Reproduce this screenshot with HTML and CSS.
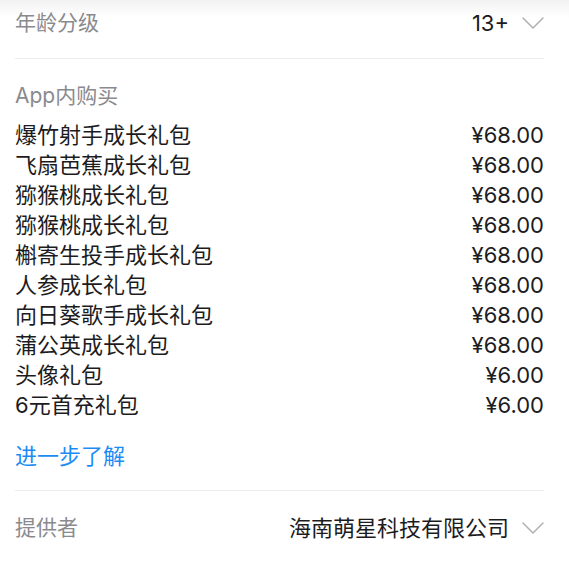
FILE: index.html
```html
<!DOCTYPE html>
<html lang="zh-CN">
<head>
<meta charset="utf-8">
<title>App信息</title>
<link rel="stylesheet" href="styles.css">
</head>
<body>
<div class="page">
  <div class="row rating">
    <span class="label">年龄分级</span>
    <span class="value">13+<svg class="chev" viewBox="0 0 22 12" width="22" height="12"><path d="M1 1 L11 11 L21 1" fill="none" stroke="#b0b0b4" stroke-width="1.5" stroke-linecap="round" stroke-linejoin="round"/></svg></span>
  </div>
  <div class="iap">
    <div class="label title">App内购买</div>
    <ul class="items">
      <li><span>爆竹射手成长礼包</span><span>¥68.00</span></li>
      <li><span>飞扇芭蕉成长礼包</span><span>¥68.00</span></li>
      <li><span>猕猴桃成长礼包</span><span>¥68.00</span></li>
      <li><span>猕猴桃成长礼包</span><span>¥68.00</span></li>
      <li><span>槲寄生投手成长礼包</span><span>¥68.00</span></li>
      <li><span>人参成长礼包</span><span>¥68.00</span></li>
      <li><span>向日葵歌手成长礼包</span><span>¥68.00</span></li>
      <li><span>蒲公英成长礼包</span><span>¥68.00</span></li>
      <li><span>头像礼包</span><span>¥6.00</span></li>
      <li><span>6元首充礼包</span><span>¥6.00</span></li>
    </ul>
    <a class="more" href="#">进一步了解</a>
  </div>
  <div class="row provider">
    <span class="label">提供者</span>
    <span class="value">海南萌星科技有限公司<svg class="chev" viewBox="0 0 22 12" width="22" height="12"><path d="M1 1 L11 11 L21 1" fill="none" stroke="#b0b0b4" stroke-width="1.5" stroke-linecap="round" stroke-linejoin="round"/></svg></span>
  </div>
</div>
</body>
</html>
```
FILE: styles.css
```css
html {
  background: #ffffff;
}
html, body {
  margin: 0;
  padding: 0;
}
body {
  background: linear-gradient(to bottom, #f2f2f2 0px, #ffffff 18px) no-repeat;
  background-size: 100% 18px;
  font-family: "Inter", "Noto Sans CJK SC", sans-serif;
  color: #1c1c1e;
  font-size: 22px;
}
.page {
  padding: 0 25px 0 15px;
}
.row {
  display: flex;
  justify-content: space-between;
  align-items: center;
  line-height: 30px;
}
.rating {
  height: 46px;
  margin-bottom: 12px;
}
.label {
  color: #8a8a8e;
  font-size: 21px;
}
.value {
  display: flex;
  align-items: center;
  gap: 13px;
}
.chev {
  display: block;
}
.iap {
  border-top: 1px solid #ececee;
  border-bottom: 1px solid #ececee;
  padding-top: 22px;
  padding-bottom: 19px;
}
.title {
  line-height: 30px;
  margin-bottom: 9px;
}
.items {
  list-style: none;
  margin: 0;
  padding: 0;
}
.items li {
  display: flex;
  justify-content: space-between;
  line-height: 30px;
}
.more {
  display: block;
  margin-top: 21px;
  line-height: 30px;
  color: #1a8cf4;
  text-decoration: none;
}
.provider {
  padding-top: 22px;
}
```
